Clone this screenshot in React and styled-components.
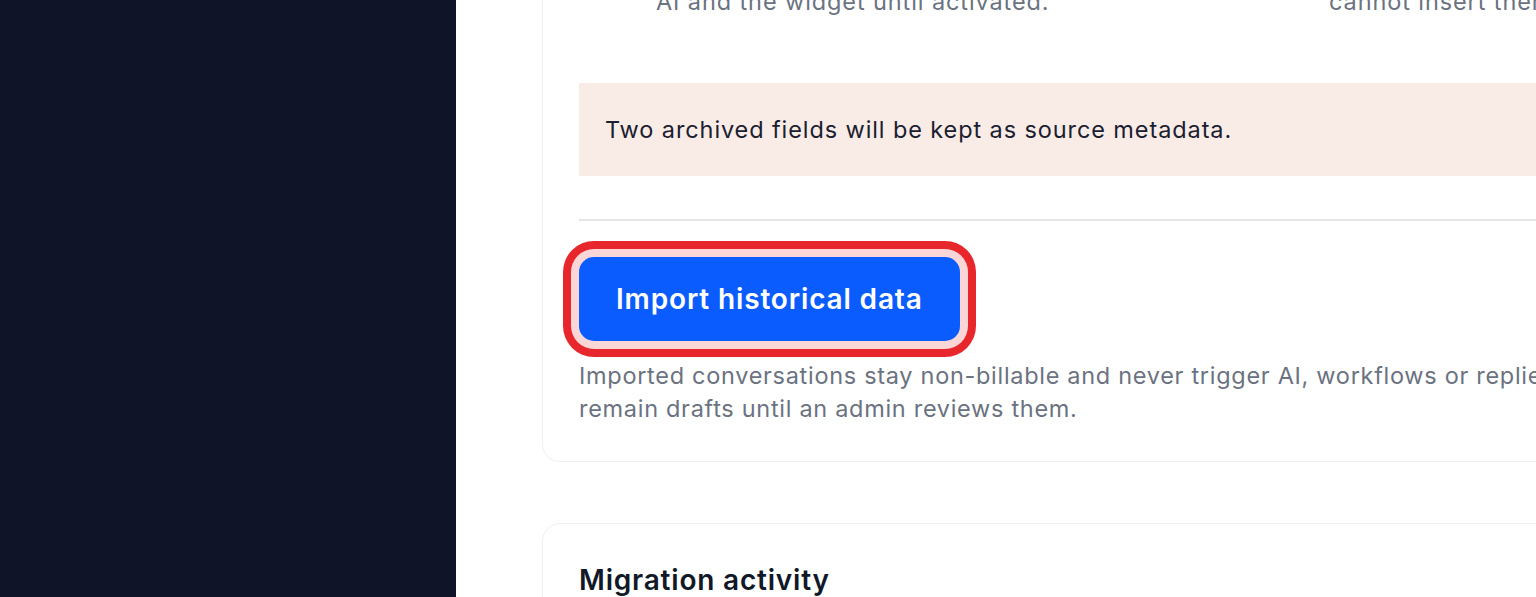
import React from "react";
import styled, { createGlobalStyle } from "styled-components";

const GlobalStyle = createGlobalStyle`
  html, body { margin: 0; padding: 0; background: #ffffff; }
  body {
    overflow: hidden;
    font-family: Inter, "Noto Sans", "Liberation Sans", sans-serif;
    -webkit-font-smoothing: antialiased;
  }
`;

const Shell = styled.div`
  display: flex;
  height: 597px;
  overflow: hidden;
`;

const Sidebar = styled.aside`
  flex: 0 0 456px;
  background: #0f1428;
`;

const Main = styled.main`
  flex: 1;
  min-width: 0;
  padding-left: 86px;
  overflow: hidden;
`;

const Stack = styled.div`
  display: flex;
  flex-direction: column;
  gap: 61px;
  margin-top: -118px;
  width: 1384px;
`;

const Card = styled.section`
  background: #ffffff;
  border: 1.5px solid #eff0f2;
  border-radius: 18px;
  padding: 36px;
  display: flex;
  flex-direction: column;
`;

const Options = styled.div`
  display: grid;
  grid-template-columns: repeat(2, minmax(0, 1fr));
  column-gap: 36px;
  margin-bottom: 65px;
`;

const Option = styled.div`
  display: grid;
  grid-template-columns: 41px minmax(0, 1fr);
  column-gap: 36px;
`;

const OptionMark = styled.span`
  width: 24px;
  height: 24px;
  margin-top: 5px;
  border-radius: 50%;
  border: 2px solid #c7cbd3;
`;

const OptionTitle = styled.div`
  font-size: 23.5px;
  line-height: 33px;
  font-weight: 600;
  color: #111827;
  white-space: nowrap;
`;

const OptionText = styled.p`
  margin: 0;
  font-size: 23.5px;
  line-height: 33px;
  letter-spacing: 0.9px;
  color: #6b7280;
  white-space: nowrap;
`;

const Notice = styled.div`
  background: #f9ece7;
  padding: 30px 26px;
  font-size: 23.5px;
  line-height: 33px;
  letter-spacing: 0.9px;
  color: #1b2030;
`;

const Divider = styled.hr`
  border: 0;
  height: 1.5px;
  background: #e3e5e9;
  margin: 43px 0 0;
`;

const ActionRow = styled.div`
  display: flex;
  margin-top: 36px;
`;

const PrimaryButton = styled.button`
  font-family: inherit;
  font-size: 28px;
  font-weight: 600;
  letter-spacing: 0.85px;
  color: #ffffff;
  background: #0b5cff;
  border: 0;
  border-radius: 15px;
  height: 84px;
  padding: 0 37px;
  cursor: pointer;
  box-shadow: ${({ $highlighted }) =>
    $highlighted ? "0 0 0 8px #fbd6d6, 0 0 0 16px #e8272d" : "none"};
`;

const Helper = styled.p`
  margin: 18px 0 0;
  font-size: 23.5px;
  line-height: 33px;
  letter-spacing: 0.7px;
  color: #6b7280;
  white-space: nowrap;
`;

const CardTitle = styled.h2`
  margin: 0;
  font-size: 28px;
  line-height: 40px;
  font-weight: 600;
  letter-spacing: 0.8px;
  color: #111827;
`;

export default function App() {
  return (
    <>
      <GlobalStyle />
      <Shell>
        <Sidebar />
        <Main>
          <Stack>
            <Card>
              <Options>
                <Option>
                  <OptionMark />
                  <div>
                    <OptionTitle>Keep imported data hidden</OptionTitle>
                    <OptionText>
                      Imported conversations stay out of reporting, the
                      <br />
                      AI and the widget until activated.
                    </OptionText>
                  </div>
                </Option>
                <Option>
                  <OptionMark />
                  <div>
                    <OptionTitle>Read-only history</OptionTitle>
                    <OptionText>
                      Agents can read imported threads but
                      <br />
                      cannot insert them into live conversations.
                    </OptionText>
                  </div>
                </Option>
              </Options>
              <Notice>Two archived fields will be kept as source metadata.</Notice>
              <Divider />
              <ActionRow>
                <PrimaryButton $highlighted>Import historical data</PrimaryButton>
              </ActionRow>
              <Helper>
                Imported conversations stay non-billable and never trigger AI, workflows or replies. Imported notes
                <br />
                remain drafts until an admin reviews them.
              </Helper>
            </Card>
            <Card>
              <CardTitle>Migration activity</CardTitle>
            </Card>
          </Stack>
        </Main>
      </Shell>
    </>
  );
}
